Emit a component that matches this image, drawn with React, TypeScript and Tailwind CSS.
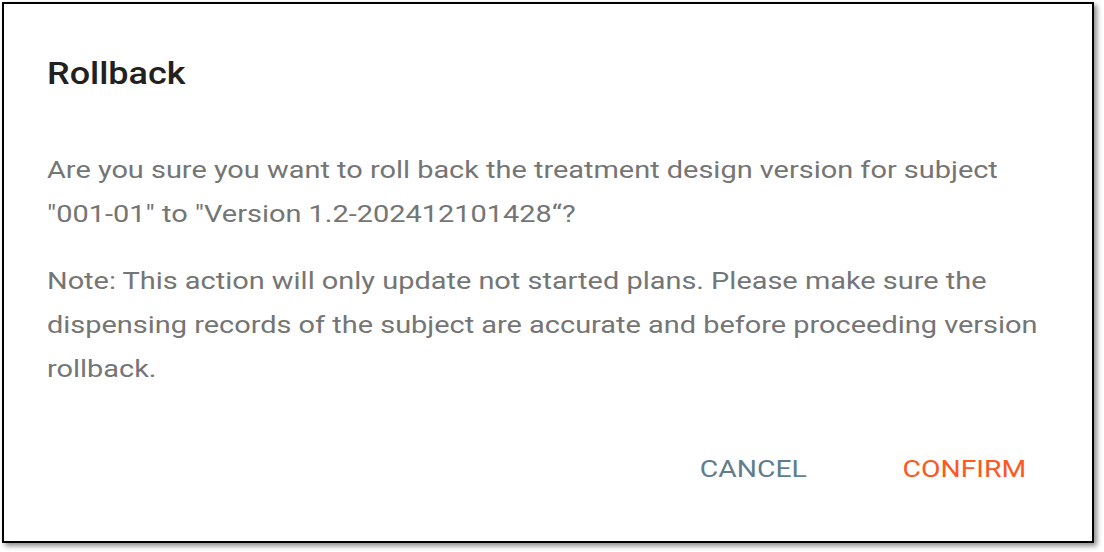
import React from "react";

export default function App() {
  return (
    <div className="w-[1104px] h-[552px] bg-white overflow-hidden" style={{ fontFamily: "Roboto, 'Liberation Sans', sans-serif" }}>
      <div className="ml-[2px] mt-[2px] w-[1092px] h-[541px] border-2 border-black bg-white shadow-[3px_3px_5px_rgba(0,0,0,0.45)] flex flex-col">
        <div className="px-[43px] pt-[50px] text-[31px] leading-[40px] font-medium text-[#212121]">
          <div className="origin-left scale-x-[1.16]">Rollback</div>
        </div>
        <div className="pl-[43px] mt-[54px] text-[24px] leading-[44px] text-[#757575]">
          <div className="w-[838px] origin-left scale-x-[1.205]">
            <p>Are you sure you want to roll back the treatment design version for subject "001-01" to "Version 1.2-202412101428“?</p>
            <p className="mt-[23px]">Note: This action will only update not started plans. Please make sure the dispensing records of the subject are accurate and before proceeding version rollback.</p>
          </div>
        </div>
        <div className="flex justify-end items-center gap-[114px] pr-[75px] mt-[56px]">
          <button className="text-[24px] leading-[44px] font-normal text-[#607d8b] scale-x-[1.18]">CANCEL</button>
          <button className="text-[24px] leading-[44px] font-normal text-[#ff5722] scale-x-[1.18]">CONFIRM</button>
        </div>
      </div>
    </div>
  );
}
